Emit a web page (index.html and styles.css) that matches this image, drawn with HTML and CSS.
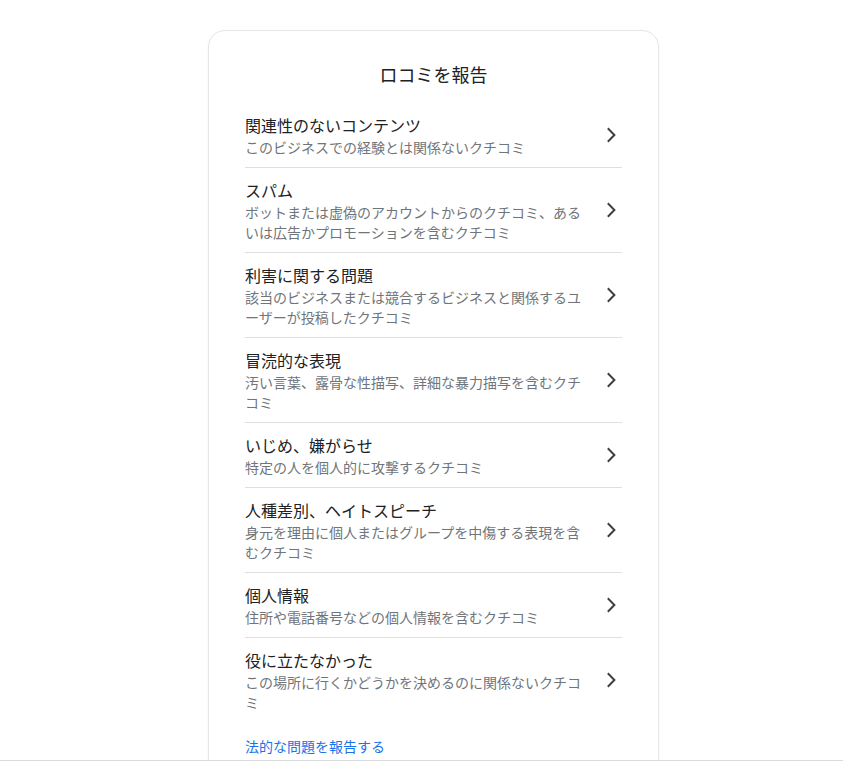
FILE: index.html
```html
<!DOCTYPE html>
<html lang="ja">
<head>
<meta charset="utf-8">
<title>口コミを報告</title>
<link rel="stylesheet" href="styles.css">
</head>
<body>
<div class="card">
  <h1 class="card-title">ロコミを報告</h1>
  <ul class="reasons">
    <li class="reason">
      <div class="reason-text">
        <div class="reason-name">関連性のないコンテンツ</div>
        <div class="reason-desc">このビジネスでの経験とは関係ないクチコミ</div>
      </div>
      <svg class="chevron" viewBox="0 0 24 24"><path d="M9.8 5.2 L16.4 12 L9.8 18.8"/></svg>
    </li>
    <li class="reason">
      <div class="reason-text">
        <div class="reason-name">スパム</div>
        <div class="reason-desc">ボットまたは虚偽のアカウントからのクチコミ、あるいは広告かプロモーションを含むクチコミ</div>
      </div>
      <svg class="chevron" viewBox="0 0 24 24"><path d="M9.8 5.2 L16.4 12 L9.8 18.8"/></svg>
    </li>
    <li class="reason">
      <div class="reason-text">
        <div class="reason-name">利害に関する問題</div>
        <div class="reason-desc">該当のビジネスまたは競合するビジネスと関係するユーザーが投稿したクチコミ</div>
      </div>
      <svg class="chevron" viewBox="0 0 24 24"><path d="M9.8 5.2 L16.4 12 L9.8 18.8"/></svg>
    </li>
    <li class="reason">
      <div class="reason-text">
        <div class="reason-name">冒涜的な表現</div>
        <div class="reason-desc">汚い言葉、露骨な性描写、詳細な暴力描写を含むクチコミ</div>
      </div>
      <svg class="chevron" viewBox="0 0 24 24"><path d="M9.8 5.2 L16.4 12 L9.8 18.8"/></svg>
    </li>
    <li class="reason">
      <div class="reason-text">
        <div class="reason-name">いじめ、嫌がらせ</div>
        <div class="reason-desc">特定の人を個人的に攻撃するクチコミ</div>
      </div>
      <svg class="chevron" viewBox="0 0 24 24"><path d="M9.8 5.2 L16.4 12 L9.8 18.8"/></svg>
    </li>
    <li class="reason">
      <div class="reason-text">
        <div class="reason-name">人種差別、ヘイトスピーチ</div>
        <div class="reason-desc">身元を理由に個人またはグループを中傷する表現を含むクチコミ</div>
      </div>
      <svg class="chevron" viewBox="0 0 24 24"><path d="M9.8 5.2 L16.4 12 L9.8 18.8"/></svg>
    </li>
    <li class="reason">
      <div class="reason-text">
        <div class="reason-name">個人情報</div>
        <div class="reason-desc">住所や電話番号などの個人情報を含むクチコミ</div>
      </div>
      <svg class="chevron" viewBox="0 0 24 24"><path d="M9.8 5.2 L16.4 12 L9.8 18.8"/></svg>
    </li>
    <li class="reason">
      <div class="reason-text">
        <div class="reason-name">役に立たなかった</div>
        <div class="reason-desc">この場所に行くかどうかを決めるのに関係ないクチコミ</div>
      </div>
      <svg class="chevron" viewBox="0 0 24 24"><path d="M9.8 5.2 L16.4 12 L9.8 18.8"/></svg>
    </li>
  </ul>
  <a class="legal-link" href="#">法的な問題を報告する</a>
</div>
<div class="bottom-bar"></div>
</body>
</html>
```

FILE: styles.css
```css
html, body {
  margin: 0;
  padding: 0;
  background: #ffffff;
}

body {
  font-family: "Noto Sans CJK JP", "Noto Sans", sans-serif;
  color: #202124;
}

.card {
  box-sizing: border-box;
  width: 451px;
  margin: 30px 0 0 208px;
  padding: 31px 36px 40px 36px;
  border: 1px solid #e6e6e6;
  border-radius: 17px;
  box-shadow: 0 1px 3px rgba(0, 0, 0, 0.05);
  background: #ffffff;
}

.card-title {
  margin: 0 0 17px 0;
  font-size: 18px;
  line-height: 24px;
  font-weight: 400;
  text-align: center;
  color: #202124;
}

.reasons {
  list-style: none;
  margin: 0;
  padding: 0;
}

.reason {
  display: flex;
  align-items: center;
  padding: 10px 0;
  border-bottom: 1px solid #dfdfdf;
}

.reason:last-child {
  border-bottom: none;
}

.reason-text {
  width: 340px;
  flex: 0 0 340px;
  margin-right: 13px;
}

.reason-name {
  font-size: 16px;
  line-height: 24px;
  color: #202124;
}

.reason-desc {
  font-size: 14px;
  line-height: 20px;
  color: #70757a;
}

.chevron {
  width: 24px;
  height: 24px;
  flex: 0 0 24px;
  fill: none;
  stroke: #3c4043;
  stroke-width: 2;
}

.legal-link {
  display: block;
  margin-top: 14px;
  font-size: 14px;
  line-height: 20px;
  color: #1a73e8;
  text-decoration: none;
}

.bottom-bar {
  position: fixed;
  left: 0;
  right: 0;
  top: 760px;
  bottom: 0;
  background: #ffffff;
  border-top: 1px solid #dadce0;
}
```
